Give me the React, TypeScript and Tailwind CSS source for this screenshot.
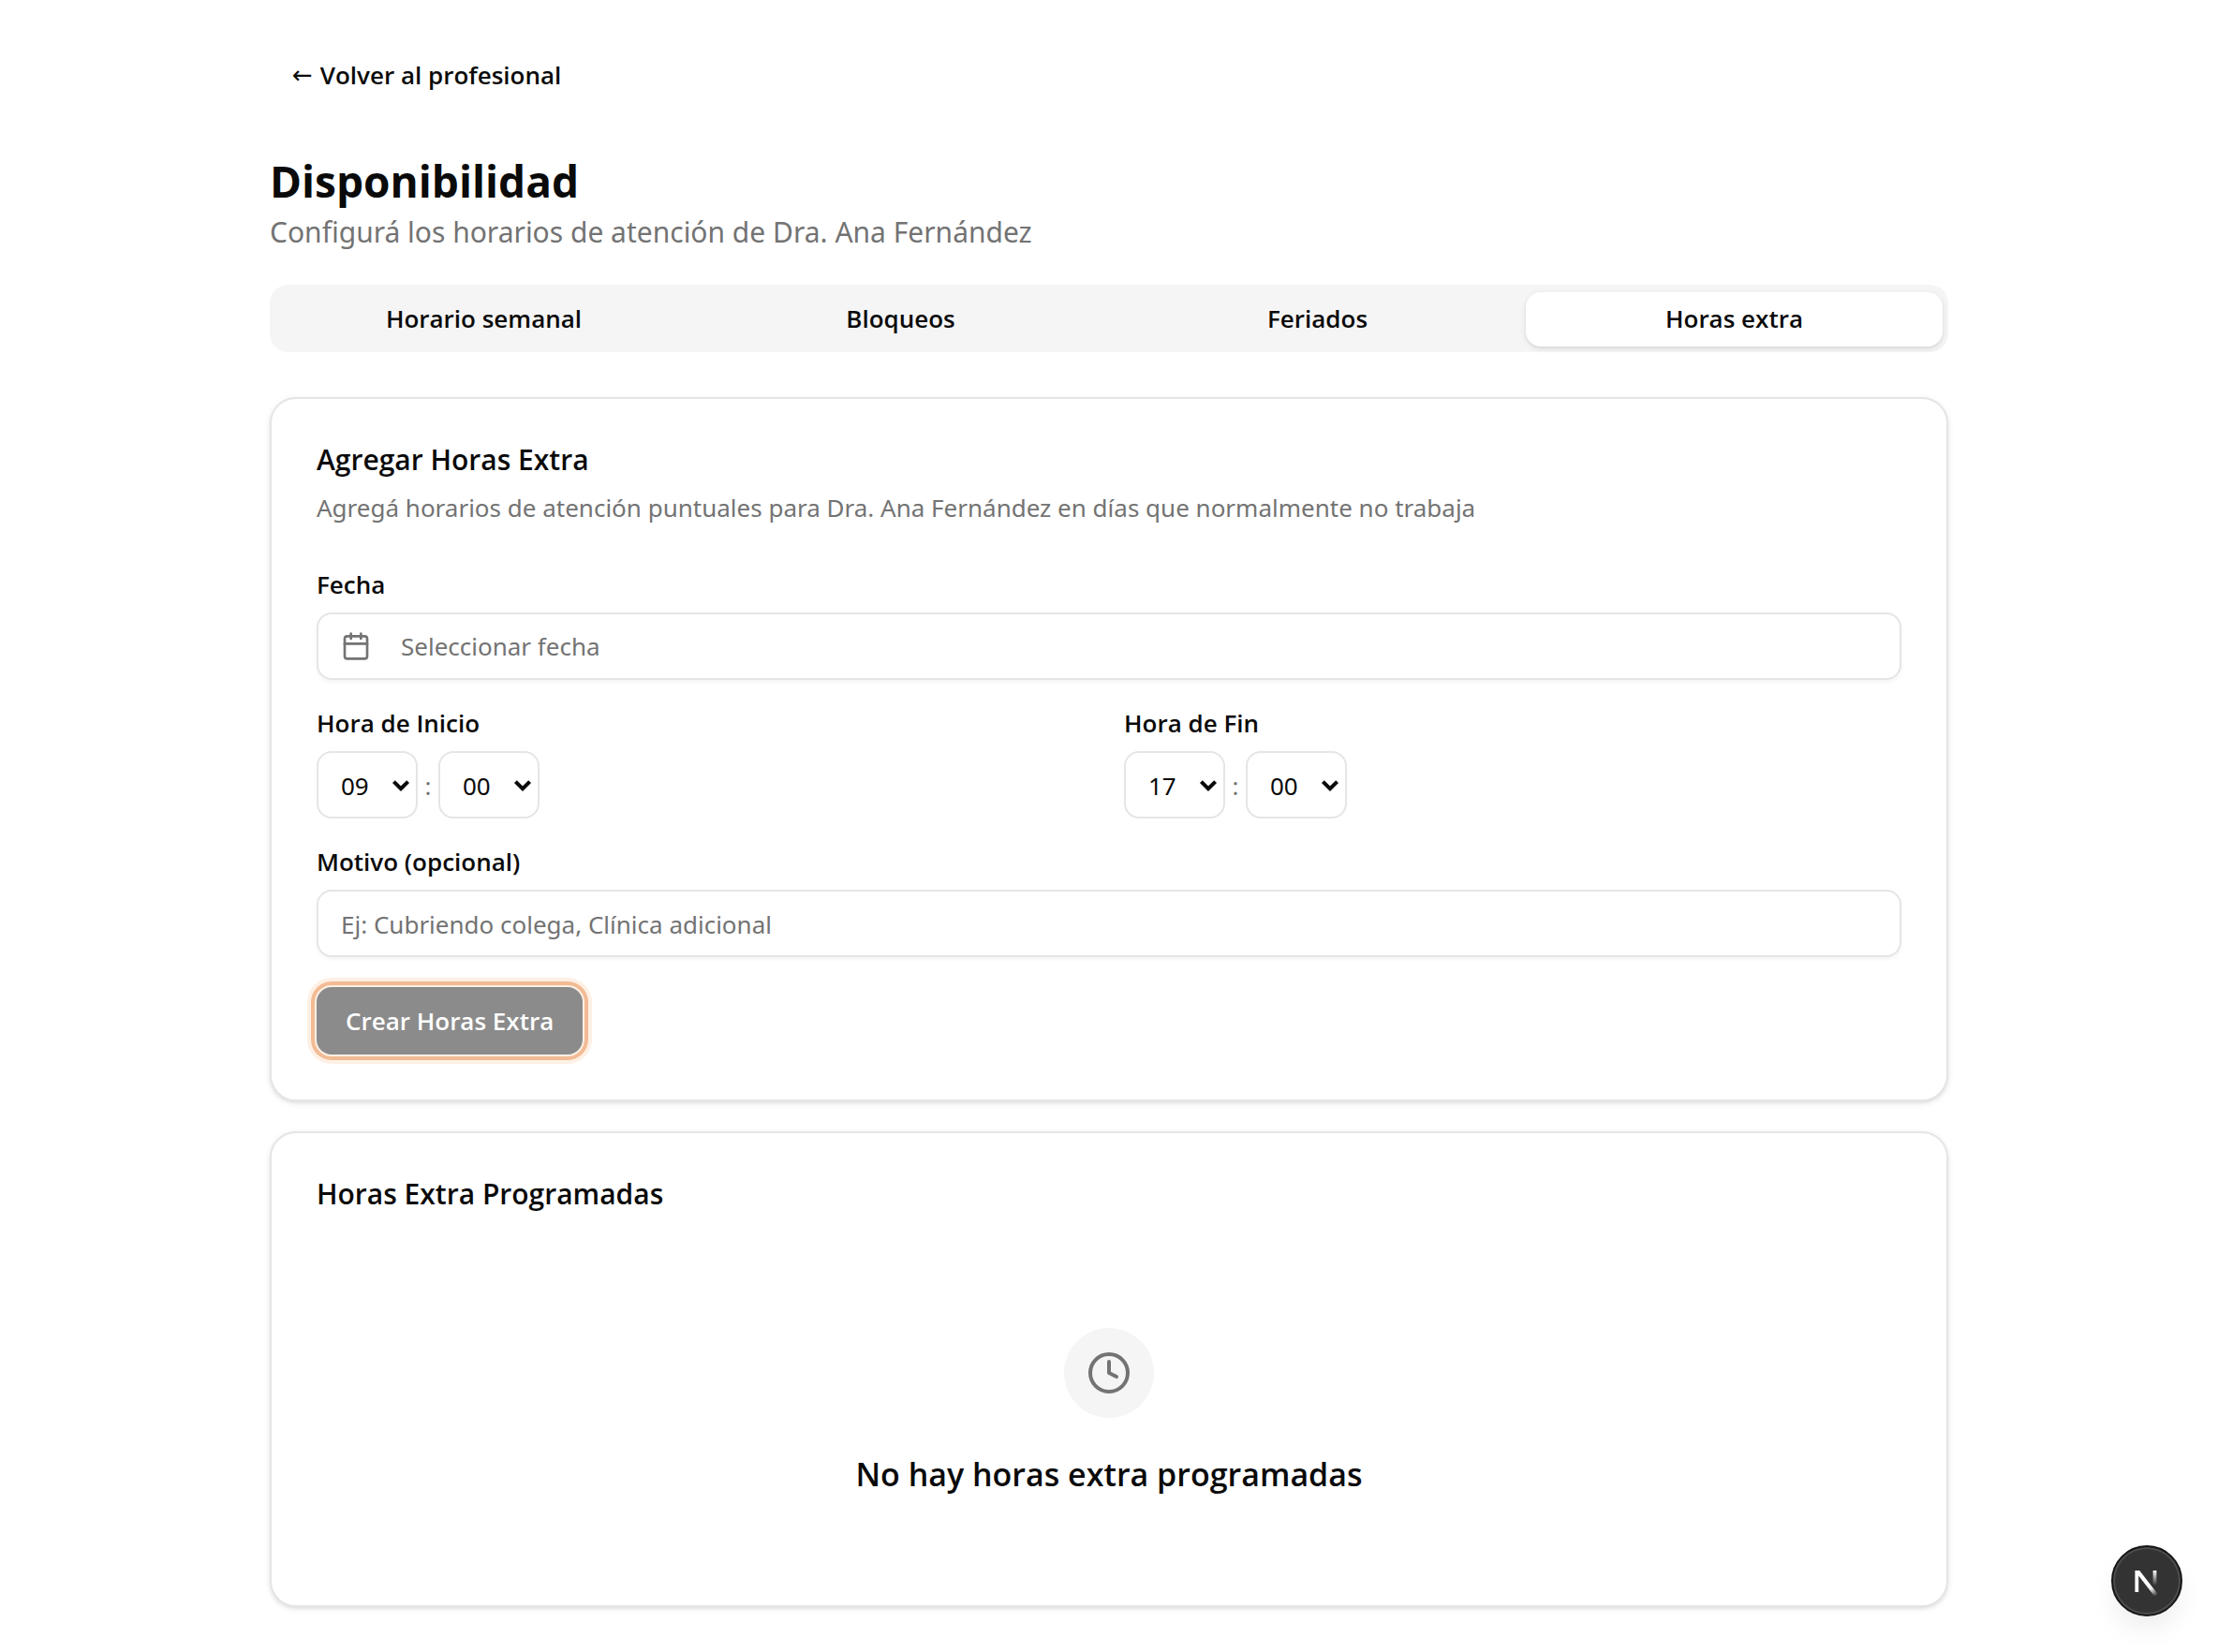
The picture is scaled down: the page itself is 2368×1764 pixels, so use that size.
import { useState } from "react";
import type { ReactNode } from "react";
import { Calendar, Clock } from "lucide-react";

const tabs = ["Horario semanal", "Bloqueos", "Feriados", "Horas extra"];
const hours = Array.from({ length: 24 }, (_, i) => String(i).padStart(2, "0"));
const minutes = ["00", "15", "30", "45"];

function Card({ title, description, children }: { title: string; description?: string; children: ReactNode }) {
  return (
    <section className="rounded-[28px] border-2 border-[#e5e5e5] bg-white p-12 shadow-[0_2px_6px_rgba(0,0,0,0.1),0_2px_4px_-2px_rgba(0,0,0,0.1)]">
      <h2 className="text-[30px] leading-[34px] font-semibold">{title}</h2>
      {description && (
        <p className="mt-3.5 font-['Noto_Sans',sans-serif] text-[26px] leading-10 text-[#737373]">{description}</p>
      )}
      {children}
    </section>
  );
}

function Label({ id, children }: { id: string; children: ReactNode }) {
  return (
    <label htmlFor={id} className="block text-[26px] leading-7 font-semibold">
      {children}
    </label>
  );
}

function TimeSelect({ id, label, value, options }: { id: string; label: string; value: string; options: string[] }) {
  return (
    <div className="relative h-[72px] w-[108px]">
      <select
        id={id}
        aria-label={label}
        defaultValue={value}
        className="size-full appearance-none rounded-2xl border-2 border-[#e5e5e5] bg-white pt-0.5 pl-6 font-['Noto_Sans',sans-serif] text-[26px]"
      >
        {options.map((o) => (
          <option key={o}>{o}</option>
        ))}
      </select>
      <svg
        viewBox="0 0 20 14"
        aria-hidden="true"
        className="pointer-events-none absolute top-[30px] right-2 h-3.5 w-5 fill-none stroke-[#0a0a0a]"
      >
        <path d="M2.4 2.6 10 10.2l7.6-7.6" strokeWidth="4" />
      </svg>
    </div>
  );
}

function TimeField({ id, label, hour }: { id: string; label: string; hour: string }) {
  return (
    <div className="flex flex-col gap-4">
      <Label id={id}>{label}</Label>
      <div className="flex items-center">
        <TimeSelect id={id} label={label} value={hour} options={hours} />
        <span className="w-[22px] pt-0.5 text-center font-['Noto_Sans',sans-serif] text-[26px] text-[#737373]">:</span>
        <TimeSelect id={id + "-minutos"} label={label + ", minutos"} value="00" options={minutes} />
      </div>
    </div>
  );
}

export default function App() {
  const [active, setActive] = useState(3);
  return (
    <div className="min-h-screen bg-white font-['Open_Sans','Noto_Sans',sans-serif] text-[#0a0a0a]">
      <main className="mx-auto max-w-[1792px] py-12">
        <a href="#profesional" className="inline-flex h-16 items-center gap-2 px-6 text-[26px] font-semibold">
          <span className="font-['DejaVu_Sans',sans-serif] font-normal">←</span>
          Volver al profesional
        </a>
        <header className="mt-12">
          <h1 className="pt-0.5 text-[46px] leading-[62px] font-bold">Disponibilidad</h1>
          <p className="font-['Noto_Sans',sans-serif] text-[30px] leading-12 text-[#737373]">
            Configurá los horarios de atención de Dra. Ana Fernández
          </p>
        </header>

        <div role="tablist" className="mt-8 grid h-18 grid-cols-4 rounded-[20px] bg-[#f5f5f5] px-1.5 pt-2 pb-1.5">
          {tabs.map((t, i) => (
            <button
              key={t}
              type="button"
              role="tab"
              aria-selected={i === active}
              onClick={() => setActive(i)}
              className={
                i === active
                  ? "rounded-2xl bg-white pb-0.5 text-[26px] font-semibold shadow-[0_2px_6px_rgba(0,0,0,0.1),0_2px_4px_-2px_rgba(0,0,0,0.1)]"
                  : "rounded-2xl pb-0.5 text-[26px] font-semibold"
              }
            >
              {t}
            </button>
          ))}
        </div>

        <div className="mt-12 flex flex-col gap-8">
          <Card
            title="Agregar Horas Extra"
            description="Agregá horarios de atención puntuales para Dra. Ana Fernández en días que normalmente no trabaja"
          >
            <form className="mt-12 flex flex-col gap-8" onSubmit={(e) => e.preventDefault()}>
              <div className="flex flex-col gap-4">
                <Label id="fecha">Fecha</Label>
                <button
                  id="fecha"
                  type="button"
                  className="flex h-18 items-center gap-8 rounded-2xl border-2 border-[#e5e5e5] px-6 font-['Noto_Sans',sans-serif] text-[26px] text-[#737373] shadow-[0_2px_4px_rgba(0,0,0,0.05)]"
                >
                  <Calendar className="size-8" />
                  Seleccionar fecha
                </button>
              </div>
              <div className="grid grid-cols-2 gap-8">
                <TimeField id="inicio" label="Hora de Inicio" hour="09" />
                <TimeField id="fin" label="Hora de Fin" hour="17" />
              </div>
              <div className="flex flex-col gap-4">
                <Label id="motivo">Motivo (opcional)</Label>
                <input
                  id="motivo"
                  type="text"
                  placeholder="Ej: Cubriendo colega, Clínica adicional"
                  className="h-18 rounded-2xl border-2 border-[#e5e5e5] px-6 pt-0.5 font-['Noto_Sans',sans-serif] text-[26px] shadow-[0_2px_4px_rgba(0,0,0,0.05)] placeholder:text-[#737373]"
                />
              </div>
              <button
                type="submit"
                className="h-18 self-start rounded-2xl bg-[#8b8b8b] px-[31px] text-[26px] font-semibold text-white shadow-[0_0_0_2px_#fef0e4,0_0_0_6px_#f2bb94,0_0_0_10px_#fef0e4]"
              >
                Crear Horas Extra
              </button>
            </form>
          </Card>

          <Card title="Horas Extra Programadas">
            <div className="mt-12 flex flex-col items-center gap-8 pt-[78px] pb-16">
              <div className="flex size-24 items-center justify-center rounded-full bg-[#f5f5f5] text-[#737373]">
                <Clock className="size-12" />
              </div>
              <p className="text-[34px] leading-14 font-semibold">No hay horas extra programadas</p>
            </div>
          </Card>
        </div>
      </main>

      <button
        type="button"
        aria-label="Herramientas de desarrollo"
        className="fixed right-[38px] bottom-[38px] flex size-[76px] items-center justify-center rounded-full border-2 border-[#171717] bg-[#333333] shadow-[inset_0_0_0_2px_#4d4d4d,0_16px_32px_-8px_rgba(0,0,0,0.1)]"
      >
        <svg viewBox="0 0 28 32" aria-hidden="true" className="h-8 w-7 fill-none">
          <defs>
            <linearGradient id="diagonal" x1="15" y1="20" x2="24" y2="32" gradientUnits="userSpaceOnUse">
              <stop stopColor="#fff" />
              <stop offset="0.4" stopColor="#fff" stopOpacity="0.9" />
              <stop offset="1" stopColor="#fff" stopOpacity="0" />
            </linearGradient>
            <linearGradient id="stem" x1="22" y1="5" x2="22" y2="21" gradientUnits="userSpaceOnUse">
              <stop stopColor="#fff" />
              <stop offset="1" stopColor="#fff" stopOpacity="0" />
            </linearGradient>
          </defs>
          <path d="M1.4 5h4.8L26 30.4 22.6 33 5.2 10.6V28H1.4z" fill="url(#diagonal)" />
          <path d="M20.6 5h3.8v16h-3.8z" fill="url(#stem)" />
        </svg>
      </button>
    </div>
  );
}
